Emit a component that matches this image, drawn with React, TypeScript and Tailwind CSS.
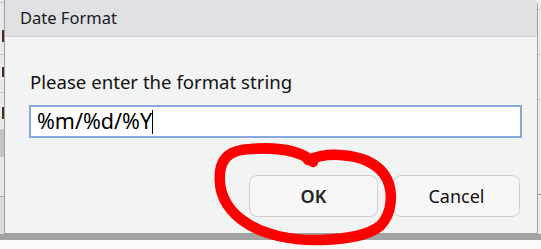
import React from "react";

const font = { fontFamily: '"Noto Sans", "Open Sans", sans-serif' };

function LeftStrip() {
  return (
    <div className="w-[4px] flex flex-col bg-[#e9e9e9]">
      <div className="h-[3px] border-b border-[#c8c8c8]" />
      <div className="h-[27px]" />
      <div className="h-[12px] flex justify-end">
        <div className="w-[2px] bg-[#4a2a1a]" />
      </div>
      <div className="h-[13px] border-b border-[#c8c8c8]" />
      <div className="h-[12px]" />
      <div className="h-[10px] flex justify-end">
        <div className="w-[2px] bg-[#4a2a1a]" />
      </div>
      <div className="h-[16px] border-b border-[#c8c8c8]" />
      <div className="h-[14px]" />
      <div className="h-[12px] flex justify-end">
        <div className="w-[2px] bg-[#4a2a1a]" />
      </div>
      <div className="h-[11px] border-b border-[#c8c8c8]" />
      <div className="h-[27px] bg-[#c4c4c4]" />
      <div className="h-[40px] border-b border-[#a8a8a8]" />
      <div className="flex-1 bg-[#dcdcdc]" />
    </div>
  );
}

function RightStrip() {
  return (
    <div className="w-[3px] flex flex-col bg-[#ececec]">
      <div className="h-[10px] border-b border-[#d0d0d0]" />
      <div className="h-[45px] border-b border-[#d0d0d0]" />
      <div className="h-[45px] border-b border-[#d0d0d0]" />
      <div className="h-[95px] border-b border-[#8a8a8a]" />
      <div className="flex-1" />
    </div>
  );
}

// hand-drawn marker ring over the OK button
function RedCircle() {
  return (
    <svg className="absolute left-0 top-0 pointer-events-none" width="541" height="249" viewBox="0 0 541 249">
      <path
        d="M 313 162 C 300 150, 275 147, 250 149 C 232 150, 222 156, 220 172 C 218 192, 226 208, 242 220 C 262 235, 292 241, 322 240 C 347 239, 367 236, 380 226 C 393 213, 393 192, 387 179 C 379 163, 360 156, 340 155 C 325 154, 315 157, 308 160"
        fill="none"
        stroke="#ff0000"
        strokeWidth="10.5"
        strokeLinecap="round"
        strokeLinejoin="round"
      />
    </svg>
  );
}

export default function App() {
  return (
    <div className="relative w-[541px] h-[249px] overflow-hidden bg-[#fafafa]" style={font}>
      <div className="flex h-[234px]">
        <LeftStrip />
        <div className="flex-1 flex flex-col border-l border-b border-r border-[#a0a0a0] rounded-tr-[6px] bg-[#f2f3f3] overflow-hidden">
          <div className="h-[37px] shrink-0 bg-[#e0e1e5] border-b border-[#d2d3d6] flex items-center pl-[15px] text-[16.5px] text-[#1a1a1a]">
            Date Format
          </div>
          <div className="flex-1 flex flex-col pl-[24px] pr-[15px]">
            <p className="mt-[32px] pl-[1px] text-[18.6px] leading-[26px] text-[#111]">Please enter the format string</p>
            <div className="mt-[10px] h-[33px] border-2 border-[#86a8dc] bg-white flex items-center pl-[6px] text-[21.5px] text-black">
              <span>%m/%d/%Y</span>
              <span className="w-px h-[24px] bg-black" />
            </div>
            <div className="mt-[37px] flex justify-end gap-[15px] pr-[2px]">
              <button
                type="button"
                className="w-[129px] h-[42px] rounded-[8px] border border-[#cfcfcf] bg-[#f6f6f6] text-[18px] font-semibold text-[#222]"
              >
                OK
              </button>
              <button
                type="button"
                className="w-[127px] h-[42px] rounded-[8px] border border-[#cfcfcf] bg-[#f6f6f6] text-[18px] text-[#111]"
              >
                Cancel
              </button>
            </div>
          </div>
        </div>
        <RightStrip />
      </div>
      <div className="h-[6px] bg-[#a3a3a3]" />
      <RedCircle />
    </div>
  );
}
